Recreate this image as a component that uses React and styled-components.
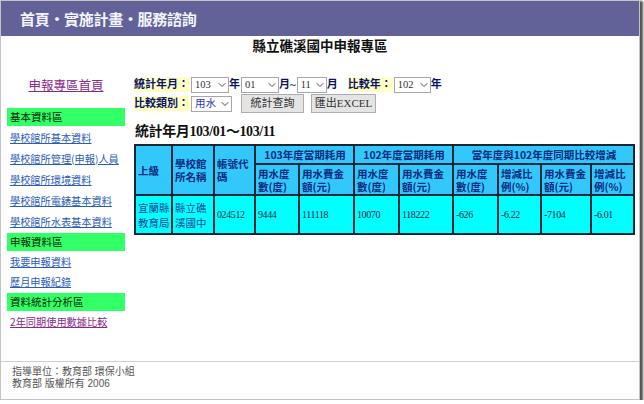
// 申報專區 — 統計查詢結果頁（縣立礁溪國中）

import React from "react";
import styled, { createGlobalStyle } from "styled-components";
import { ChevronDown } from "lucide-react";

const SANS = `"Noto Sans CJK TC", "Liberation Sans", sans-serif`;
const SERIF = `"Liberation Serif", "Noto Sans CJK TC", serif`;
const LATIN_SANS = `"Liberation Sans", "Noto Sans CJK TC", sans-serif`;

const GlobalStyle = createGlobalStyle`
  body {
    margin: 0;
    background: #ffffff;
    font-family: ${SANS};
  }
`;

const Frame = styled.div`
  box-sizing: border-box;
  width: 640px;
  height: 400px;
  border: 1px solid #c4c4c4;
  box-shadow: 2px 2px 2px 1px rgba(40, 40, 40, 0.8);
  display: flex;
  flex-direction: column;
  background: #ffffff;
`;

const TopBar = styled.div`
  height: 35px;
  background: #626299;
  color: #f4f4ff;
  font-family: ${SANS};
  font-weight: 700;
  font-size: 15px;
  line-height: 35px;
  padding-left: 19px;
  letter-spacing: -0.3px;
`;

const PageTitle = styled.h1`
  margin: 0;
  height: 22px;
  line-height: 22px;
  text-align: center;
  font-family: ${SERIF};
  font-size: 13.5px;
  font-weight: 700;
  color: #111;
`;

const Columns = styled.div`
  display: flex;
  gap: 9px;
  padding: 17px 0 0 6px;
`;

const Sidebar = styled.nav`
  width: 118px;
  flex-shrink: 0;
`;

const HomeLink = styled.a`
  display: block;
  text-align: center;
  line-height: 20px;
  margin-bottom: 12.5px;
  font-size: 12.5px;
  color: #8a2b8a;
  text-decoration: underline;
`;

const Bar = styled.div`
  height: 18px;
  margin: 1px 0;
  line-height: 18px;
  background: #33ff66;
  color: #0a1a0a;
  font-size: 10.5px;
  padding-left: 3px;
`;

const NavLink = styled.a`
  display: block;
  line-height: ${(p) => p.$pitch}px;
  padding-left: 3px;
  font-size: 10.2px;
  color: ${(p) => (p.$visited ? "#8a2b8a" : "#2c5db8")};
  text-decoration: underline;
  white-space: nowrap;
`;

const Content = styled.main`
  flex: 1;
  min-width: 0;
`;

const FormRow = styled.div`
  display: flex;
  align-items: center;
  height: ${(p) => p.$h}px;
  margin-top: ${(p) => p.$top}px;
`;

const Label = styled.span`
  background: #ffffc4;
  color: #0a1466;
  font-family: ${SERIF};
  font-weight: 700;
  font-size: 11px;
  line-height: 15px;
  padding: 0 1px 0 0;
  margin-left: ${(p) => p.$gap || 0}px;
  white-space: nowrap;
`;

const Unit = styled.span`
  color: #0a1466;
  font-family: ${SERIF};
  font-weight: 700;
  font-size: 11px;
  line-height: 15px;
  white-space: nowrap;
`;

const SelectWrap = styled.span`
  position: relative;
  display: block;
  flex-shrink: 0;
  width: ${(p) => p.$w}px;
  height: 16px;
  margin-left: 1px;
`;

const Select = styled.select`
  appearance: none;
  display: block;
  box-sizing: border-box;
  width: 100%;
  height: 16px;
  margin: 0;
  border: 1px solid #a7a7a7;
  border-radius: 0;
  background: #fff;
  padding: 0 0 0 3px;
  font-family: ${SERIF};
  font-size: 10.5px;
  line-height: 14px;
  color: ${(p) => (p.$accent ? "#2a35b8" : "#333")};
  outline: none;
`;

const Chevron = styled(ChevronDown)`
  position: absolute;
  right: 1px;
  top: 2px;
  pointer-events: none;
  color: #222;
`;

const Button = styled.button`
  box-sizing: border-box;
  flex-shrink: 0;
  width: ${(p) => p.$w}px;
  height: 19px;
  margin: 0 0 0 ${(p) => p.$gap}px;
  padding: 0;
  border: 1px solid #adadad;
  border-radius: 0;
  background: #e4e4e4;
  font-family: ${SERIF};
  font-size: 11px;
  line-height: 17px;
  color: #333;
`;

const TableTitle = styled.h2`
  margin: 10px 0 0 1px;
  line-height: 18px;
  font-family: ${SERIF};
  font-size: 14px;
  font-weight: 700;
  color: #111;
  letter-spacing: -0.4px;
`;

const Table = styled.table`
  margin-top: 3px;
  width: 499px;
  table-layout: fixed;
  border-collapse: collapse;
  border: 2px solid #10283a;
`;

const HeadCell = styled.th`
  border: 2px solid #10283a;
  background: #33c8fb;
  color: #0b2a80;
  font-family: ${SANS};
  font-size: 10.5px;
  font-weight: 700;
  line-height: 13px;
  text-align: ${(p) => (p.$center ? "center" : "left")};
  vertical-align: middle;
  padding: 0 1px 0 2px;
  word-break: break-all;
`;

const DataCell = styled.td`
  border: 2px solid #10283a;
  background: #00ffff;
  color: ${(p) => (p.$name ? "#1d3f9a" : "#1a2540")};
  font-family: ${(p) => (p.$name ? SANS : SERIF)};
  font-size: ${(p) => (p.$name ? 10.5 : 10)}px;
  line-height: 15px;
  vertical-align: middle;
  padding: 0 1px 0 2px;
  word-break: break-all;
  letter-spacing: ${(p) => (p.$name ? 0 : -0.4)}px;
`;

const Row = styled.tr`
  height: ${(p) => p.$h}px;
`;

const Footer = styled.footer`
  margin-top: auto;
  box-sizing: border-box;
  height: 38px;
  border-top: 1px solid #cfcfcf;
  padding: 4px 11px 3px;
  font-family: ${LATIN_SANS};
  font-size: 10px;
  line-height: 12px;
  color: #555;
`;

const FooterLine = styled.div`
  white-space: nowrap;
`;

const colWidths = [37, 42, 41, 44, 55, 45, 54, 45, 43, 50, 43];

const subHeads = [
  "用水度數(度)",
  "用水費金額(元)",
  "用水度數(度)",
  "用水費金額(元)",
  "用水度數(度)",
  "增減比例(%)",
  "用水費金額(元)",
  "增減比例(%)",
];

const dataRow = ["024512", "9444", "111118", "10070", "118222", "-626", "-6.22", "-7104", "-6.01"];

const Picker = ({ w, value, accent }) => (
  <SelectWrap $w={w}>
    <Select $accent={accent} defaultValue={value}>
      <option>{value}</option>
    </Select>
    <Chevron size={12} strokeWidth={1.6} />
  </SelectWrap>
);

export default function App() {
  return (
    <>
      <GlobalStyle />
      <Frame>
        <TopBar>首頁・實施計畫・服務諮詢</TopBar>
        <PageTitle>縣立礁溪國中申報專區</PageTitle>

        <Columns>
          <Sidebar>
            <HomeLink href="#">申報專區首頁</HomeLink>

            <Bar>基本資料區</Bar>
            <NavLink href="#" $pitch={21}>學校館所基本資料</NavLink>
            <NavLink href="#" $pitch={21}>學校館所管理(申報)人員</NavLink>
            <NavLink href="#" $pitch={21}>學校館所環境資料</NavLink>
            <NavLink href="#" $pitch={21}>學校館所電錶基本資料</NavLink>
            <NavLink href="#" $pitch={21}>學校館所水表基本資料</NavLink>

            <Bar>申報資料區</Bar>
            <NavLink href="#" $pitch={20}>我要申報資料</NavLink>
            <NavLink href="#" $pitch={20}>歷月申報紀錄</NavLink>

            <Bar>資料統計分析區</Bar>
            <NavLink href="#" $pitch={20} $visited>2年同期使用數據比較</NavLink>
          </Sidebar>

          <Content>
            <FormRow $h={17} $top={1}>
              <Label>統計年月：</Label>
              <Picker w={38} value="103" />
              <Unit>年</Unit>
              <Picker w={38} value="01" />
              <Unit>月~</Unit>
              <Picker w={30} value="11" />
              <Unit>月</Unit>
              <Label $gap={10}>比較年：</Label>
              <Picker w={37} value="102" />
              <Unit>年</Unit>
            </FormRow>

            <FormRow $h={19} $top={1}>
              <Label>比較類別：</Label>
              <Picker w={41} value="用水" accent />
              <Button $w={63} $gap={9}>統計查詢</Button>
              <Button $w={65} $gap={7}>匯出EXCEL</Button>
            </FormRow>

            <TableTitle>統計年月103/01～103/11</TableTitle>

            <Table>
              <colgroup>
                {colWidths.map((w, i) => (
                  <col key={i} style={{ width: w }} />
                ))}
              </colgroup>
              <thead>
                <Row $h={19}>
                  <HeadCell rowSpan={2}>上級</HeadCell>
                  <HeadCell rowSpan={2}>學校館所名稱</HeadCell>
                  <HeadCell rowSpan={2}>帳號代碼</HeadCell>
                  <HeadCell colSpan={2} $center>103年度當期耗用</HeadCell>
                  <HeadCell colSpan={2} $center>102年度當期耗用</HeadCell>
                  <HeadCell colSpan={4} $center>當年度與102年度同期比較增減</HeadCell>
                </Row>
                <Row $h={31}>
                  {subHeads.map((t, i) => (
                    <HeadCell key={i}>{t}</HeadCell>
                  ))}
                </Row>
              </thead>
              <tbody>
                <Row $h={39}>
                  <DataCell $name>宜蘭縣教育局</DataCell>
                  <DataCell $name>縣立礁溪國中</DataCell>
                  {dataRow.map((v, i) => (
                    <DataCell key={i}>{v}</DataCell>
                  ))}
                </Row>
              </tbody>
            </Table>
          </Content>
        </Columns>

        <Footer>
          <FooterLine>指導單位：教育部 環保小組</FooterLine>
          <FooterLine>教育部 版權所有 2006</FooterLine>
        </Footer>
      </Frame>
    </>
  );
}
